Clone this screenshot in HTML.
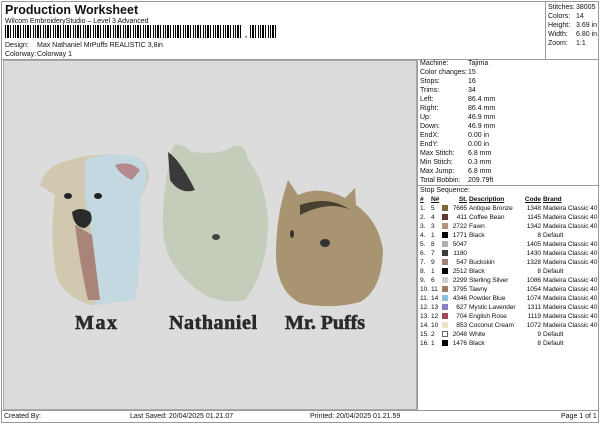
<!DOCTYPE html>
<html><head><meta charset="utf-8"><style>
*{margin:0;padding:0;box-sizing:border-box}
body{width:600px;height:424px;background:#fff;font-family:"Liberation Sans",Arial,sans-serif;font-size:7px;color:#111;position:relative;overflow:hidden}
.a{position:absolute;white-space:nowrap;line-height:9px}
.bc{position:absolute;top:25px;height:13px;background:repeating-linear-gradient(90deg,#000 0 1px,#fff 1px 2px,#000 2px 4px,#fff 4px 5px,#000 5px 6px,#fff 6px 8px,#000 8px 9px,#fff 9px 10px)}
table{border-collapse:collapse}
td{padding:0;height:9px;line-height:9px;font-size:6.6px;white-space:nowrap;letter-spacing:-0.1px}
.sw{display:inline-block;width:6px;height:6px;vertical-align:-1px}
</style></head><body>
<div style="position:absolute;left:1px;top:1px;width:598px;height:422px;border:1px solid #999"></div>
<div class="a" style="left:5px;top:3px;font-size:12.5px;font-weight:bold;line-height:14px">Production Worksheet</div>
<div class="a" style="left:5px;top:17px">Wilcom EmbroideryStudio – Level 3 Advanced</div>
<div class="bc" style="left:5px;width:238px"></div>
<div class="a" style="left:245px;top:31px;font-weight:bold">,</div>
<div class="bc" style="left:250px;width:28px"></div>
<div class="a" style="left:5px;top:41px">Design:</div><div class="a" style="left:37px;top:41px">Max Nathaniel MrPuffs REALISTIC 3,8in</div>
<div class="a" style="left:5px;top:50px">Colorway:</div><div class="a" style="left:37px;top:50px">Colorway 1</div>
<div style="position:absolute;left:545px;top:1px;width:1px;height:58px;background:#999"></div>
<div class="a" style="left:548px;top:3px">Stitches:<br>Colors:<br>Height:<br>Width:<br>Zoom:</div>
<div class="a" style="left:576px;top:3px">38005<br>14<br>3.69 in<br>6.80 in<br>1:1</div>
<div style="position:absolute;left:2px;top:59px;width:596px;height:1px;background:#999"></div>
<div style="position:absolute;left:3px;top:60px;width:414px;height:350px;background:#dcdcdc;border:1px solid #aaa"></div>
<div style="position:absolute;left:417px;top:60px;width:1px;height:350px;background:#999"></div>
<svg style="position:absolute;left:0;top:0" width="420" height="340">
<path d="M40 185 Q45 165 70 160 Q100 150 140 158 Q152 170 148 182 L140 200 Q142 260 135 300 L90 305 Q60 295 55 270 Q50 230 55 195 Z" fill="#d2c8b0"/>
<path d="M85 160 Q110 150 140 158 Q152 172 145 185 L140 200 Q142 260 135 300 L95 305 Q96 240 85 200 Z" fill="#c4d8e2"/>
<path d="M75 225 Q80 265 88 300 L100 300 Q95 260 92 235 Z" fill="#a98478"/>
<path d="M115 165 Q130 160 140 170 L132 180 Q120 175 115 165 Z" fill="#b48a8c"/>
<ellipse cx="68" cy="196" rx="4" ry="3" fill="#222"/><ellipse cx="98" cy="196" rx="4" ry="3" fill="#222"/>
<path d="M72 212 Q80 206 90 212 Q95 222 85 228 Q74 228 72 212 Z" fill="#2a2a2a"/>
<path d="M172 150 Q175 138 192 152 Q220 155 230 148 Q245 140 248 160 Q265 180 268 220 Q268 270 245 300 Q220 305 200 292 Q170 270 164 240 Q160 200 172 150 Z" fill="#c4ccba"/>
<path d="M168 152 Q180 160 195 190 Q180 195 170 180 Z" fill="#3a3a3a"/>
<ellipse cx="216" cy="237" rx="4" ry="3" fill="#444"/>
<path d="M285 190 L288 180 L298 195 Q320 185 345 198 L355 188 L356 205 Q378 220 383 250 Q382 290 360 302 Q330 310 300 303 Q275 290 276 250 Q277 215 285 190 Z" fill="#a89470"/>
<path d="M300 205 Q330 195 350 210 Q330 200 300 215 Z" fill="#4a4030"/>
<ellipse cx="325" cy="243" rx="5" ry="4" fill="#333"/><ellipse cx="292" cy="234" rx="2" ry="4" fill="#333"/>
<g font-family="'Liberation Serif',serif" font-weight="bold" font-size="20" fill="#2a2a2a" stroke="#2a2a2a" stroke-width="0.6">
<text x="75" y="329" textLength="42">Max</text><text x="169" y="329" textLength="88">Nathaniel</text><text x="285" y="329" textLength="80">Mr. Puffs</text></g>
</svg>
<div class="a" style="left:420px;top:59px">Machine:<br>Color changes:<br>Stops:<br>Trims:<br>Left:<br>Right:<br>Up:<br>Down:<br>EndX:<br>EndY:<br>Max Stitch:<br>Min Stitch:<br>Max Jump:<br>Total Bobbin:</div>
<div class="a" style="left:468px;top:59px">Tajima<br>15<br>16<br>34<br>86.4 mm<br>86.4 mm<br>46.9 mm<br>46.9 mm<br>0.00 in<br>0.00 in<br>6.8 mm<br>0.3 mm<br>6.8 mm<br>209.79ft</div>
<div style="position:absolute;left:418px;top:185px;width:180px;height:1px;background:#999"></div>
<div class="a" style="left:420px;top:186px">Stop Sequence:</div>
<table style="position:absolute;left:420px;top:195px">
<tr style="font-weight:bold;text-decoration:underline"><td style="width:11px">#</td><td style="width:11px">N#</td><td style="width:8px"></td><td style="width:17px;text-align:right">St.</td><td style="width:55px;padding-left:2px">Description</td><td style="width:19px;text-align:right">Code</td><td style="padding-left:2px">Brand</td></tr>
<tr><td>1.</td><td>5</td><td><span class="sw" style="background:#7a6a3a"></span></td><td align="right">7665</td><td style="padding-left:2px">Antique Bronze</td><td align="right">1348</td><td style="padding-left:2px">Madeira Classic 40</td></tr>
<tr><td>2.</td><td>4</td><td><span class="sw" style="background:#5a3a2a"></span></td><td align="right">411</td><td style="padding-left:2px">Coffee Bean</td><td align="right">1145</td><td style="padding-left:2px">Madeira Classic 40</td></tr>
<tr><td>3.</td><td>3</td><td><span class="sw" style="background:#b89080"></span></td><td align="right">2722</td><td style="padding-left:2px">Fawn</td><td align="right">1342</td><td style="padding-left:2px">Madeira Classic 40</td></tr>
<tr><td>4.</td><td>1</td><td><span class="sw" style="background:#000"></span></td><td align="right">1771</td><td style="padding-left:2px">Black</td><td align="right">8</td><td style="padding-left:2px">Default</td></tr>
<tr><td>5.</td><td>8</td><td><span class="sw" style="background:#b0b0a8"></span></td><td align="right">5047</td><td style="padding-left:2px"></td><td align="right">1405</td><td style="padding-left:2px">Madeira Classic 40</td></tr>
<tr><td>6.</td><td>7</td><td><span class="sw" style="background:#3a3a3a"></span></td><td align="right">1180</td><td style="padding-left:2px"></td><td align="right">1430</td><td style="padding-left:2px">Madeira Classic 40</td></tr>
<tr><td>7.</td><td>9</td><td><span class="sw" style="background:#a08070"></span></td><td align="right">547</td><td style="padding-left:2px">Buckskin</td><td align="right">1328</td><td style="padding-left:2px">Madeira Classic 40</td></tr>
<tr><td>8.</td><td>1</td><td><span class="sw" style="background:#000"></span></td><td align="right">2512</td><td style="padding-left:2px">Black</td><td align="right">8</td><td style="padding-left:2px">Default</td></tr>
<tr><td>9.</td><td>6</td><td><span class="sw" style="background:#c8d0d0"></span></td><td align="right">2299</td><td style="padding-left:2px">Sterling Silver</td><td align="right">1086</td><td style="padding-left:2px">Madeira Classic 40</td></tr>
<tr><td>10.</td><td>11</td><td><span class="sw" style="background:#a07868"></span></td><td align="right">3795</td><td style="padding-left:2px">Tawny</td><td align="right">1054</td><td style="padding-left:2px">Madeira Classic 40</td></tr>
<tr><td>11.</td><td>14</td><td><span class="sw" style="background:#90c0e0"></span></td><td align="right">4346</td><td style="padding-left:2px">Powder Blue</td><td align="right">1074</td><td style="padding-left:2px">Madeira Classic 40</td></tr>
<tr><td>12.</td><td>13</td><td><span class="sw" style="background:#8a80c8"></span></td><td align="right">627</td><td style="padding-left:2px">Mystic Lavender</td><td align="right">1311</td><td style="padding-left:2px">Madeira Classic 40</td></tr>
<tr><td>13.</td><td>12</td><td><span class="sw" style="background:#a04858"></span></td><td align="right">704</td><td style="padding-left:2px">English Rose</td><td align="right">1119</td><td style="padding-left:2px">Madeira Classic 40</td></tr>
<tr><td>14.</td><td>10</td><td><span class="sw" style="background:#f0e0c8"></span></td><td align="right">853</td><td style="padding-left:2px">Coconut Cream</td><td align="right">1072</td><td style="padding-left:2px">Madeira Classic 40</td></tr>
<tr><td>15.</td><td>2</td><td><span class="sw" style="background:#fff;border:1px solid #666"></span></td><td align="right">2048</td><td style="padding-left:2px">White</td><td align="right">9</td><td style="padding-left:2px">Default</td></tr>
<tr><td>16.</td><td>1</td><td><span class="sw" style="background:#000"></span></td><td align="right">1476</td><td style="padding-left:2px">Black</td><td align="right">8</td><td style="padding-left:2px">Default</td></tr>
</table>
<div style="position:absolute;left:2px;top:410px;width:596px;height:1px;background:#999"></div>
<div class="a" style="left:4px;top:412px">Created By:</div>
<div class="a" style="left:130px;top:412px">Last Saved: 20/04/2025 01.21.07</div>
<div class="a" style="left:310px;top:412px">Printed: 20/04/2025 01.21.59</div>
<div class="a" style="left:561px;top:412px">Page 1 of 1</div>
</body></html>
